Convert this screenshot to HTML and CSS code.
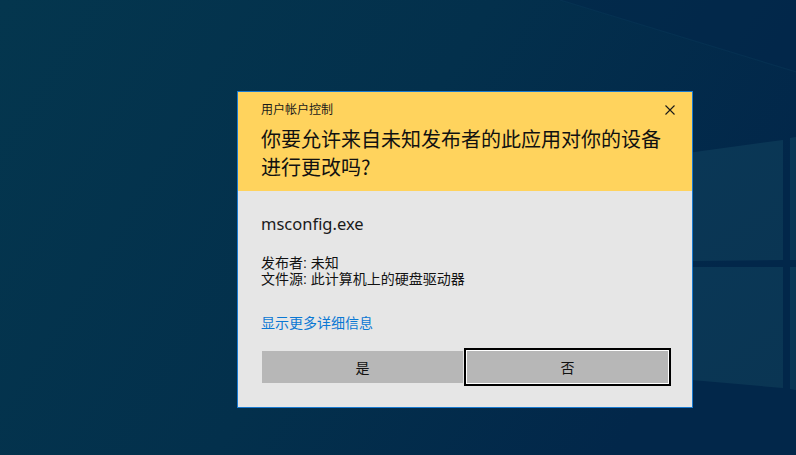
FILE: index.html
```html
<!DOCTYPE html>
<html lang="zh-CN">
<head>
<meta charset="utf-8">
<title>用户帐户控制</title>
<link rel="stylesheet" href="styles.css">
</head>
<body>
<div class="desktop">
  <svg class="wallpaper" width="796" height="455" viewBox="0 0 796 455" aria-hidden="true">
    <defs>
      <linearGradient id="bg" x1="0" y1="0" x2="1" y2="0.35">
        <stop offset="0" stop-color="#04364e"/>
        <stop offset="0.55" stop-color="#03304c"/>
        <stop offset="1" stop-color="#02274a"/>
      </linearGradient>
      <linearGradient id="pane" x1="0" y1="0" x2="1" y2="1">
        <stop offset="0" stop-color="#0a3857"/>
        <stop offset="1" stop-color="#0a3553"/>
      </linearGradient>
    </defs>
    <rect width="796" height="455" fill="url(#bg)"/>
    <polygon points="560,0 796,0 796,72" fill="#02254a" opacity="0.5"/>
    <line x1="560" y1="0" x2="796" y2="72" stroke="#0a3858" stroke-width="1.2" opacity="0.5"/>
    <polygon points="600,165 783,140 783,260 600,262" fill="url(#pane)"/>
    <polygon points="790,138 796,137 796,260 790,260" fill="url(#pane)"/>
    <polygon points="600,267 783,267 783,388 600,372" fill="url(#pane)"/>
    <polygon points="790,267 796,267 796,390 790,389" fill="url(#pane)"/>
  </svg>

  <section class="uac" role="dialog" aria-label="用户帐户控制">
    <header class="uac-head">
      <div class="uac-titlebar">
        <span class="uac-title">用户帐户控制</span>
        <span class="uac-close" aria-label="关闭">
          <svg width="10" height="10" viewBox="0 0 10 10"><path d="M0.5 0.5 L9.5 9.5 M9.5 0.5 L0.5 9.5" stroke="#1a1a1a" stroke-width="1.1" fill="none"/></svg>
        </span>
      </div>
      <h1 class="uac-question">你要允许来自未知发布者的此应用对你的设备进行更改吗?</h1>
    </header>
    <div class="uac-body">
      <div class="uac-program">msconfig.exe</div>
      <div class="uac-info">
        <div>发布者: 未知</div>
        <div>文件源: 此计算机上的硬盘驱动器</div>
      </div>
      <a class="uac-more" href="#">显示更多详细信息</a>
      <div class="uac-buttons">
        <button class="uac-btn">是</button>
        <button class="uac-btn uac-btn-focus">否</button>
      </div>
    </div>
  </section>
</div>
</body>
</html>
```
FILE: styles.css
```css
* { box-sizing: border-box; }
html, body { margin: 0; padding: 0; }
body {
  width: 796px;
  height: 455px;
  overflow: hidden;
  font-family: "Noto Sans", "Noto Sans CJK SC", sans-serif;
  background: #03304c;
}
.desktop {
  position: relative;
  width: 796px;
  height: 455px;
  padding: 91px 0 0 237px;
}
.wallpaper {
  position: absolute;
  left: 0;
  top: 0;
}
.uac {
  position: relative;
  width: 456px;
  border: 1px solid #1a7ad0;
  background: #e6e6e6;
}
.uac-head {
  background: #ffd35d;
  padding: 9px 17px 10px 23px;
}
.uac-titlebar {
  display: flex;
  justify-content: space-between;
  align-items: center;
  height: 16px;
}
.uac-title {
  font-family: "Noto Sans CJK SC", sans-serif;
  font-size: 12px;
  line-height: 16px;
  color: #1a1a1a;
}
.uac-close {
  display: flex;
  width: 10px;
  height: 10px;
  margin-top: 1px;
}
.uac-question {
  margin: 8px 0 0;
  font-family: "Noto Sans CJK SC", sans-serif;
  font-weight: normal;
  font-size: 20px;
  line-height: 28px;
  color: #111;
  width: 410px;
}
.uac-body {
  padding: 22px 23px 24px 24px;
  display: flex;
  flex-direction: column;
  align-items: flex-start;
}
.uac-program {
  font-family: "Noto Sans", sans-serif;
  font-size: 16.5px;
  line-height: 22px;
  color: #1a1a1a;
  margin-left: -1px;
}
.uac-info {
  margin-top: 20px;
  font-family: "Liberation Sans", "Noto Sans CJK SC", sans-serif;
  font-size: 14px;
  line-height: 16px;
  color: #111;
  margin-left: -1px;
}
.uac-more {
  margin-top: 26px;
  font-family: "Noto Sans CJK SC", sans-serif;
  font-size: 14px;
  line-height: 18px;
  color: #0a78d4;
  text-decoration: none;
  margin-left: -1px;
}
.uac-buttons {
  margin-top: 20px;
  display: flex;
  gap: 4px;
}
.uac-btn {
  width: 201px;
  height: 32px;
  border: 0;
  padding: 0;
  background: #b7b7b7;
  font-family: "Noto Sans CJK SC", sans-serif;
  font-size: 14px;
  color: #111;
}
.uac-btn-focus {
  box-shadow: 0 0 0 1px #ffffff, 0 0 0 3px #000000;
}
```
